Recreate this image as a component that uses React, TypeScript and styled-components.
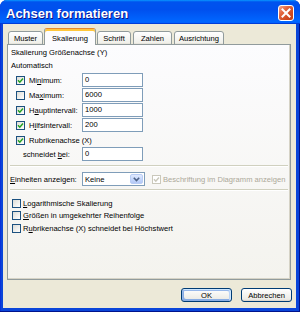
import React from 'react';
import styled, { createGlobalStyle, css } from 'styled-components';

const Global = createGlobalStyle`
  html, body { margin: 0; padding: 0; background: #fff; }
  body { font-family: "Liberation Sans", Arial, sans-serif; }
`;

const Window = styled.div`
  width: 300px;
  height: 312px;
  display: flex;
  flex-direction: column;
  background: #0a45d9;
  border-radius: 7px 7px 0 0;
  overflow: hidden;
  box-shadow: inset -1px -1px #00138c, inset 1px 0 #0831d9;
  font-family: "Liberation Sans", Arial, sans-serif;
  font-size: 7.6px;
  color: #000;
`;

const TitleBar = styled.div`
  flex: 0 0 24px;
  display: flex;
  align-items: center;
  justify-content: space-between;
  padding: 2px 6px 0 6px;
  box-sizing: border-box;
  background: linear-gradient(180deg, #0997ff, #0053ee 8%, #0050ee 40%, #06f 88%, #06f 93%, #005bff 95%, #003dd7 96%, #003dd7);
`;

const TitleText = styled.span`
  color: #fff;
  font-weight: bold;
  font-size: 13px;
  text-shadow: 1px 1px #0f1089;
`;

const CloseButton = styled.div`
  width: 16px;
  height: 16px;
  box-sizing: border-box;
  border: 1px solid #fff;
  border-radius: 3px;
  background: linear-gradient(135deg, #f4a88a 0%, #e2663f 35%, #d04a20 70%, #c13d15 100%);
  display: flex;
  align-items: center;
  justify-content: center;
`;

const Body = styled.div`
  flex: 1;
  margin: 0 4px 4px 3px;
  background: #ece9d8;
  display: flex;
  flex-direction: column;
  padding: 4px 5px 6px 4px;
  box-sizing: border-box;
`;

const TabStrip = styled.div`
  display: flex;
  align-items: flex-end;
  gap: 2px;
  height: 17px;
  padding-left: 1px;
  margin-bottom: -1px;
  position: relative;
  z-index: 1;
`;

const Tab = styled.div<{ $w: number; $active?: boolean }>`
  width: ${p => p.$w}px;
  box-sizing: border-box;
  height: ${p => (p.$active ? 17 : 14)}px;
  display: flex;
  align-items: center;
  justify-content: center;
  border: 1px solid #919b9c;
  border-radius: 3px 3px 0 0;
  ${p =>
    p.$active
      ? css`
          margin: 0 -1px;
          border-top-color: #e68b2c;
          border-bottom: none;
          box-shadow: inset 0 2px #ffc73c;
          background: #fcfcfe;
          padding-top: 2px;
        `
      : css`
          background: linear-gradient(180deg, #fff, #fafaf9 26%, #f0f0ea 90%, #e2ded4);
        `}
`;

const Panel = styled.div`
  height: 236px;
  box-sizing: border-box;
  border: 1px solid #919b9c;
  box-shadow: inset -1px -1px #d6d3c6;
  background: linear-gradient(180deg, #fcfcfe, #f4f3ee);
  display: flex;
  flex-direction: column;
  padding: 2px 2px 0 3px;
`;

const Heading = styled.div<{ $h: number }>`
  height: ${p => p.$h}px;
  line-height: ${p => p.$h}px;
  white-space: nowrap;
`;

const FieldRow = styled.div<{ $gapAfter?: number; $shift?: number }>`
  display: flex;
  align-items: center;
  height: 14px;
  margin-bottom: ${p => p.$gapAfter ?? 0}px;
  margin-left: ${p => p.$shift ?? 0}px;
`;

const LabelCell = styled.div<{ $w: number; $indent: number }>`
  flex: 0 0 ${p => p.$w}px;
  display: flex;
  align-items: center;
  padding-left: ${p => p.$indent}px;
  box-sizing: border-box;
  white-space: nowrap;
`;

const TextBox = styled.div`
  width: 61px;
  height: 14px;
  box-sizing: border-box;
  border: 1px solid #7f9db9;
  background: #fff;
  padding-left: 2px;
  line-height: 12px;
`;

const Select = styled.div`
  width: 63px;
  height: 14px;
  box-sizing: border-box;
  border: 1px solid #7f9db9;
  background: #fff;
  display: flex;
  align-items: center;
  justify-content: space-between;
  padding: 1px 1px 1px 2px;
`;

const DropButton = styled.div`
  width: 13px;
  height: 100%;
  box-sizing: border-box;
  border: 1px solid #b9cdf5;
  border-radius: 2px;
  background: linear-gradient(180deg, #e1eafe, #c2d5fb 60%, #b4c8f6);
  display: flex;
  align-items: center;
  justify-content: center;
`;

const Separator = styled.div<{ $top: number }>`
  margin-top: ${p => p.$top}px;
  margin-left: -1px;
  height: 0;
  border-top: 1px solid #d0d0bf;
  border-bottom: 1px solid #fff;
`;

const Box = styled.span<{ $disabled?: boolean }>`
  flex: 0 0 9px;
  width: 9px;
  height: 9px;
  box-sizing: border-box;
  border: 1px solid ${p => (p.$disabled ? '#cac8bb' : '#1c5180')};
  background: ${p => (p.$disabled ? '#fff' : 'linear-gradient(135deg, #dcdcd7, #fff)')};
  display: inline-flex;
  align-items: center;
  justify-content: center;
`;

const LabelText = styled.span<{ $gap: number; $disabled?: boolean }>`
  margin-left: ${p => p.$gap}px;
  color: ${p => (p.$disabled ? '#aca899' : '#000')};
  white-space: nowrap;
`;

const CheckList = styled.div`
  margin-top: 6px;
  display: flex;
  flex-direction: column;
`;

const CheckRow = styled.div`
  height: 12.5px;
  display: flex;
  align-items: center;
  padding-left: 1px;
`;

const ButtonRow = styled.div`
  margin-top: auto;
  margin-right: -1px;
  display: flex;
  justify-content: flex-end;
  gap: 9px;
`;

const Button = styled.div<{ $default?: boolean }>`
  width: 51px;
  height: 14px;
  box-sizing: border-box;
  border: 1px solid #003c74;
  border-radius: 3px;
  background: linear-gradient(180deg, #fff, #ecebe6 86%, #d6d0c5);
  display: flex;
  align-items: center;
  justify-content: center;
  ${p =>
    p.$default &&
    css`
      box-shadow: inset -1px 1px #cee7ff, inset 1px 2px #98b8ea, inset -2px 2px #bcd4f6,
        inset 1px -1px #89ade4, inset 2px -2px #89ade4;
    `}
`;

const Check: React.FC<{ checked?: boolean; disabled?: boolean }> = ({ checked, disabled }) => (
  <Box $disabled={disabled}>
    {checked && (
      <svg width="7" height="7" viewBox="0 0 7 7">
        <path
          d="M1 3.3 L2.8 5.2 L6 1.6"
          fill="none"
          stroke={disabled ? '#cac8bb' : '#21a121'}
          strokeWidth="1.5"
        />
      </svg>
    )}
  </Box>
);

const tabs = [
  { label: 'Muster', w: 35 },
  { label: 'Skalierung', w: 52, active: true },
  { label: 'Schrift', w: 34 },
  { label: 'Zahlen', w: 39 },
  { label: 'Ausrichtung', w: 50 },
];

const fields: { label: React.ReactNode; value: string; checked: boolean }[] = [
  { label: <>Mi<u>n</u>imum:</>, value: '0', checked: true },
  { label: <>Ma<u>x</u>imum:</>, value: '6000', checked: false },
  { label: <>H<u>a</u>uptintervall:</>, value: '1000', checked: true },
  { label: <>H<u>i</u>lfsintervall:</>, value: '200', checked: true },
];

const options: React.ReactNode[] = [
  <><u>L</u>ogarithmische Skalierung</>,
  <><u>G</u>rößen in umgekehrter Reihenfolge</>,
  <>R<u>u</u>brikenachse (X) schneidet bei Höchstwert</>,
];

export default function App() {
  return (
    <>
      <Global />
      <Window>
        <TitleBar>
          <TitleText>Achsen formatieren</TitleText>
          <CloseButton>
            <svg width="10" height="10" viewBox="0 0 10 10">
              <path d="M1.5 1.5 L8.5 8.5 M8.5 1.5 L1.5 8.5" stroke="#fff" strokeWidth="2" strokeLinecap="square" />
            </svg>
          </CloseButton>
        </TitleBar>
        <Body>
          <TabStrip>
            {tabs.map(t => (
              <Tab key={t.label} $w={t.w} $active={t.active}>
                {t.label}
              </Tab>
            ))}
          </TabStrip>
          <Panel>
            <Heading $h={12}>Skalierung Größenachse (Y)</Heading>
            <Heading $h={14}>Automatisch</Heading>
            {fields.map((f, i) => (
              <FieldRow key={i} $gapAfter={1}>
                <LabelCell $w={71} $indent={5}>
                  <Check checked={f.checked} />
                  <LabelText $gap={4}>{f.label}</LabelText>
                </LabelCell>
                <TextBox>{f.value}</TextBox>
              </FieldRow>
            ))}
            <FieldRow>
              <LabelCell $w={71} $indent={5}>
                <Check checked />
                <LabelText $gap={4}>Rubrikenachse (X)</LabelText>
              </LabelCell>
            </FieldRow>
            <FieldRow $gapAfter={1}>
              <LabelCell $w={71} $indent={12}>
                <LabelText $gap={0}>
                  schneidet <u>b</u>ei:
                </LabelText>
              </LabelCell>
              <TextBox>0</TextBox>
            </FieldRow>
            <Separator $top={3} />
            <FieldRow $shift={-1} style={{ marginTop: 5 }}>
              <LabelCell $w={72} $indent={0}>
                <LabelText $gap={0}>
                  <u>E</u>inheiten anzeigen:
                </LabelText>
              </LabelCell>
              <Select>
                <span>Keine</span>
                <DropButton>
                  <svg width="7" height="5" viewBox="0 0 7 5">
                    <path d="M0.8 0.8 L3.5 3.5 L6.2 0.8" fill="none" stroke="#4d6185" strokeWidth="1.6" />
                  </svg>
                </DropButton>
              </Select>
              <LabelCell $w={140} $indent={7}>
                <Check checked disabled />
                <LabelText $gap={2} $disabled>
                  Beschriftung im Diagramm anzeigen
                </LabelText>
              </LabelCell>
            </FieldRow>
            <Separator $top={3} />
            <CheckList>
              {options.map((o, i) => (
                <CheckRow key={i}>
                  <Check />
                  <LabelText $gap={2}>{o}</LabelText>
                </CheckRow>
              ))}
            </CheckList>
          </Panel>
          <ButtonRow>
            <Button $default>OK</Button>
            <Button>Abbrechen</Button>
          </ButtonRow>
        </Body>
      </Window>
    </>
  );
}
